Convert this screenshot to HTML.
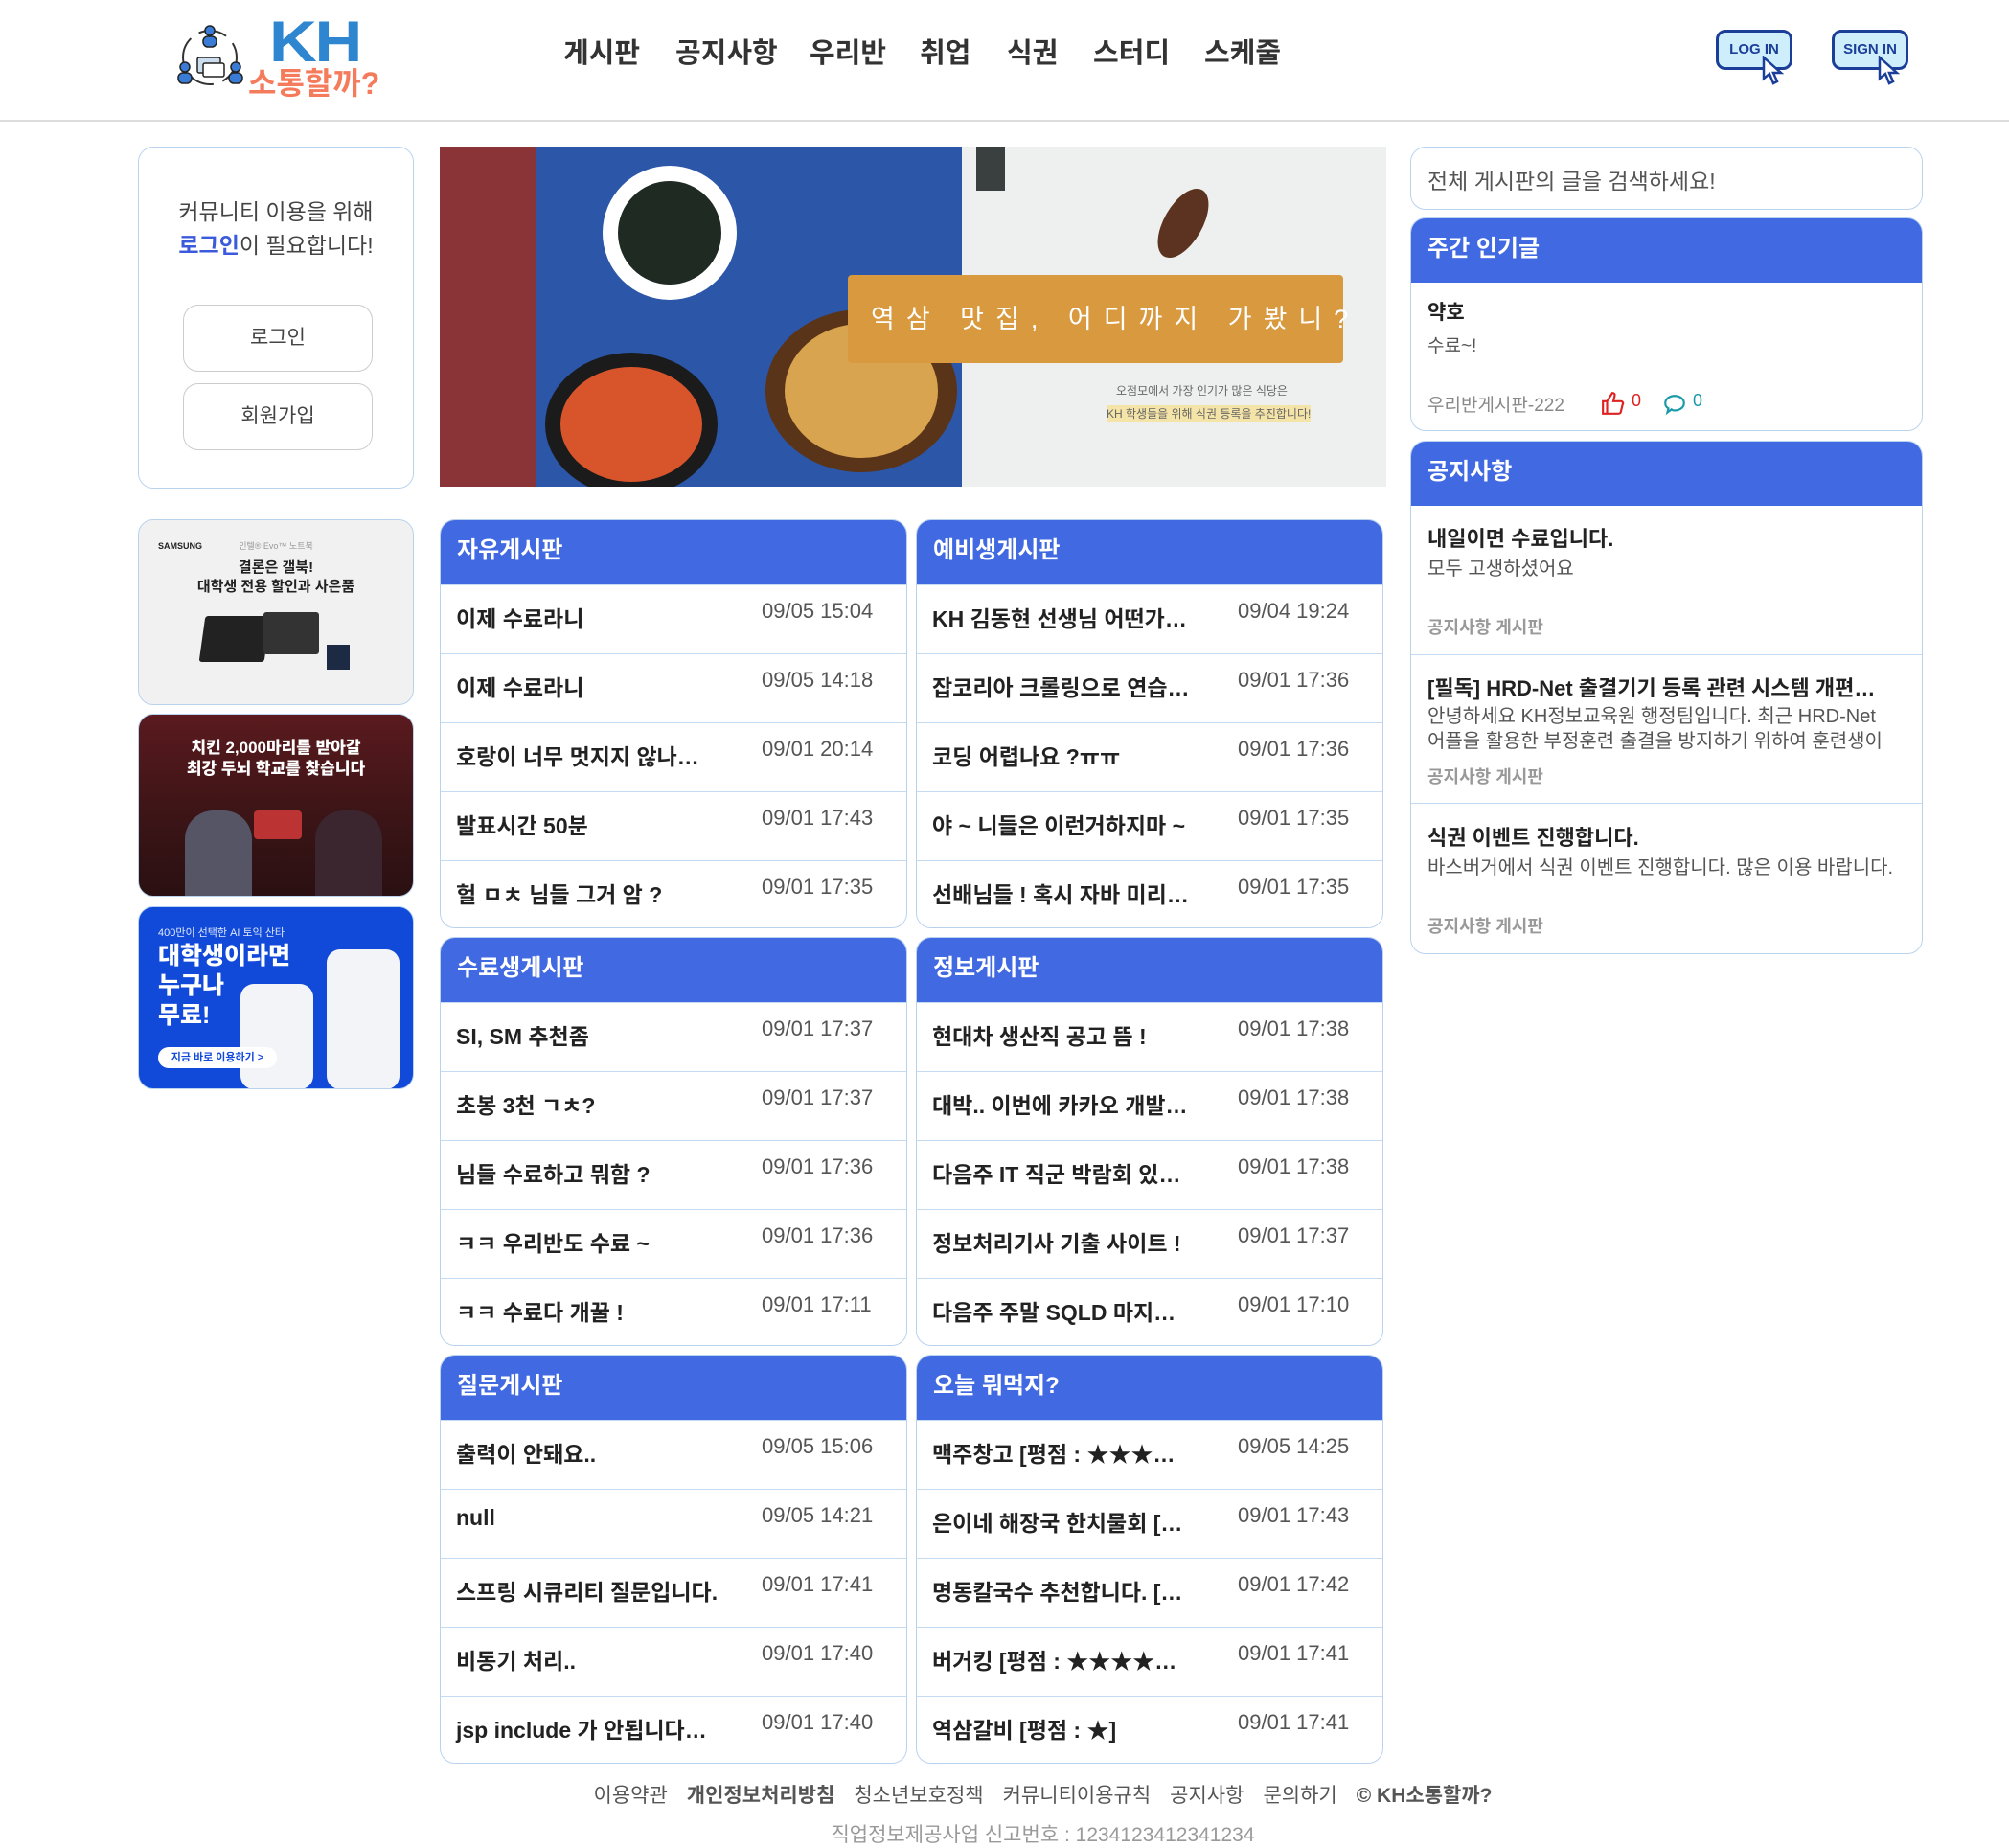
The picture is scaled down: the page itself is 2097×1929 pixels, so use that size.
<!DOCTYPE html>
<html><head><meta charset="utf-8"><style>
*{box-sizing:border-box;margin:0;padding:0}
body{width:2097px;height:1926px;background:#fff;font-family:"Liberation Sans","Noto Sans CJK KR",sans-serif;color:#222;position:relative;overflow:hidden}
.a{position:absolute}
.hdr{left:0;top:0;width:2097px;height:127px;border-bottom:2px solid #ddd}
.nav{top:32px;font-size:29px;font-weight:bold;color:#333}
.box{border:1.5px solid #b9d3ef;border-radius:16px;background:#fff;overflow:hidden}
.bh{background:#4169e1;color:#fff;font-weight:bold;font-size:24px;padding-left:17px;height:67px;line-height:64px}
.row{height:72px;border-top:1.5px solid #c5dbf2;position:relative}
.row .t{position:absolute;left:16px;top:16px;font-size:23px;font-weight:bold;color:#222;white-space:nowrap}
.row .d{position:absolute;left:335px;top:14px;font-size:22px;color:#555}
.row:first-child{border-top:none}
.btn{position:absolute;left:46px;width:198px;height:70px;border:1.5px solid #ccc;border-radius:16px;text-align:center;line-height:68px;font-size:21px;color:#444}
.ni{position:absolute;left:17px;font-size:21px}
.ft a{color:#555;text-decoration:none;margin:0 10px}
</style></head><body>
<div class="a hdr"></div>
<svg class="a" style="left:184px;top:24px" width="72" height="76" viewBox="0 0 72 76">
<circle cx="35" cy="36" r="28" fill="none" stroke="#333" stroke-width="2" stroke-dasharray="30 10"/>
<circle cx="35" cy="8" r="5" fill="#3a7bd5" stroke="#222" stroke-width="1.5"/><rect x="28" y="14" width="14" height="11" rx="5" fill="#3a7bd5" stroke="#222" stroke-width="1.5"/>
<circle cx="9" cy="46" r="5" fill="#3a7bd5" stroke="#222" stroke-width="1.5"/><rect x="2" y="52" width="14" height="11" rx="5" fill="#3a7bd5" stroke="#222" stroke-width="1.5"/>
<circle cx="62" cy="46" r="5" fill="#3a7bd5" stroke="#222" stroke-width="1.5"/><rect x="55" y="52" width="14" height="11" rx="5" fill="#3a7bd5" stroke="#222" stroke-width="1.5"/>
<rect x="22" y="36" width="24" height="16" rx="2" fill="#cde" stroke="#222" stroke-width="1.5"/><rect x="28" y="42" width="22" height="14" rx="2" fill="#fff" stroke="#222" stroke-width="1.5"/>
</svg>
<div class="a" style="left:281px;top:14px;font-size:60px;font-weight:900;color:#2f86d0;letter-spacing:-2px;line-height:60px;transform:scaleX(1.15);transform-origin:left">KH</div>
<div class="a" style="left:259px;top:68px;font-size:32px;font-weight:bold;color:#f47c5c;line-height:38px">소통할까?</div>
<div class="a nav" style="left:588px">게시판</div>
<div class="a nav" style="left:705px">공지사항</div>
<div class="a nav" style="left:845px">우리반</div>
<div class="a nav" style="left:960px">취업</div>
<div class="a nav" style="left:1051px">식권</div>
<div class="a nav" style="left:1141px">스터디</div>
<div class="a nav" style="left:1257px">스케줄</div>
<div class="a" style="left:1791px;top:31px;width:80px;height:42px;border:3px solid #1b3f99;border-radius:10px;background:#cfeefc;font:bold 15px 'Liberation Sans';color:#1b3f99;text-align:center;line-height:36px">LOG IN</div>
<svg class="a" style="left:1838px;top:58px" width="26" height="32" viewBox="0 0 26 32"><path d="M3 2 L3 24 L9 19 L13 29 L17 27 L13 18 L21 18 Z" fill="#fff" stroke="#1b3f99" stroke-width="2.5"/></svg>
<div class="a" style="left:1912px;top:31px;width:80px;height:42px;border:3px solid #1b3f99;border-radius:10px;background:#cfeefc;font:bold 15px 'Liberation Sans';color:#1b3f99;text-align:center;line-height:36px">SIGN IN</div>
<svg class="a" style="left:1959px;top:58px" width="26" height="32" viewBox="0 0 26 32"><path d="M3 2 L3 24 L9 19 L13 29 L17 27 L13 18 L21 18 Z" fill="#fff" stroke="#1b3f99" stroke-width="2.5"/></svg>

<div class="a box" style="left:144px;top:153px;width:288px;height:357px">
<div style="position:absolute;top:50px;width:100%;text-align:center;font-size:23px;color:#444;line-height:35px">커뮤니티 이용을 위해<br><span style="color:#3b5bdb;font-weight:bold">로그인</span>이 필요합니다!</div>
<div class="btn" style="top:164px">로그인</div>
<div class="btn" style="top:246px">회원가입</div>
</div>

<div class="a box" style="left:144px;top:542px;width:288px;height:194px;background:#f1f1f1">
<div class="a" style="left:20px;top:22px;font:bold 9px 'Liberation Sans';color:#222">SAMSUNG</div>
<div class="a" style="left:0;top:20px;width:100%;text-align:center;font-size:9px;color:#999">인텔® Evo™ 노트북</div>
<div class="a" style="left:0;top:40px;width:100%;text-align:center;font-size:15px;font-weight:bold;line-height:20px">결론은 갤북!<br>대학생 전용 할인과 사은품</div>
<div class="a" style="left:66px;top:100px;width:68px;height:48px;background:#222;transform:skewX(-8deg);border-radius:3px"></div>
<div class="a" style="left:130px;top:96px;width:58px;height:44px;background:#333;border-radius:3px"></div>
<div class="a" style="left:196px;top:130px;width:24px;height:26px;background:#1d2a44"></div>
</div>
<div class="a box" style="left:144px;top:745px;width:288px;height:191px;background:linear-gradient(#5a1a1e,#3a1416 60%,#2a1012)">
<div class="a" style="left:0;top:24px;width:100%;text-align:center;font-size:17px;font-weight:900;color:#fff;line-height:22px">치킨 2,000마리를 받아갈<br>최강 두뇌 학교를 찾습니다</div>
<div class="a" style="left:48px;top:100px;width:70px;height:90px;background:#556;border-radius:30px 30px 0 0"></div>
<div class="a" style="left:184px;top:100px;width:70px;height:90px;background:#3b2630;border-radius:30px 30px 0 0"></div>
<div class="a" style="left:120px;top:100px;width:50px;height:30px;background:#b33;border-radius:4px"></div>
</div>
<div class="a box" style="left:144px;top:946px;width:288px;height:191px;background:#1149d8">
<div class="a" style="left:20px;top:18px;font-size:11px;color:#dfe8ff">400만이 선택한 AI 토익 산타</div>
<div class="a" style="left:20px;top:36px;font-size:25px;font-weight:900;color:#fff;line-height:31px">대학생이라면<br>누구나<br>무료!</div>
<div class="a" style="left:106px;top:80px;width:76px;height:110px;background:#f2f4f8;border-radius:14px"></div>
<div class="a" style="left:196px;top:44px;width:76px;height:146px;background:#f2f4f8;border-radius:14px"></div>
<div class="a" style="left:20px;top:146px;width:124px;height:22px;background:#fff;border-radius:11px;font-size:11px;color:#1149d8;text-align:center;line-height:22px;font-weight:bold">지금 바로 이용하기 &gt;</div>
</div>

<div class="a" style="left:459px;top:153px;width:988px;height:355px;overflow:hidden;background:#edf0ee">
<div class="a" style="left:0;top:0;width:545px;height:355px;background:#2c56a8"></div>
<div class="a" style="left:0;top:0;width:100px;height:355px;background:#8b3438"></div>
<div class="a" style="left:170px;top:20px;width:140px;height:140px;border-radius:50%;background:#fff"></div>
<div class="a" style="left:186px;top:36px;width:108px;height:108px;border-radius:50%;background:#1f2a22"></div>
<div class="a" style="left:110px;top:215px;width:180px;height:150px;border-radius:50%;background:#1b1b1b"></div>
<div class="a" style="left:126px;top:230px;width:148px;height:120px;border-radius:50%;background:#d8552c"></div>
<div class="a" style="left:340px;top:170px;width:200px;height:170px;border-radius:50%;background:#5a3418"></div>
<div class="a" style="left:360px;top:185px;width:160px;height:140px;border-radius:50%;background:#d9a44f"></div>
<div class="a" style="left:560px;top:0;width:30px;height:46px;background:#39403f"></div>
<div class="a" style="left:756px;top:40px;width:40px;height:80px;border-radius:50%;background:#5b3320;transform:rotate(30deg)"></div>
<div class="a" style="left:426px;top:134px;width:517px;height:92px;background:#d9993e;border-radius:4px"></div>
<div class="a" style="left:450px;top:158px;font-size:27px;color:#fff;letter-spacing:12px">역삼 맛집, 어디까지 가봤니?</div>
<div class="a" style="left:706px;top:246px;font-size:12px;color:#666">오점모에서 가장 인기가 많은 식당은</div>
<div class="a" style="left:696px;top:270px;font-size:12px;color:#666;background:#f5e4a8">KH 학생들을 위해 식권 등록을 추진합니다!</div>
</div>

<div class="a box" style="left:1472px;top:153px;width:535px;height:66px">
<div class="a" style="left:17px;top:16px;font-size:23px;color:#555">전체 게시판의 글을 검색하세요!</div>
</div>
<div class="a box" style="left:1472px;top:227px;width:535px;height:223px">
<div class="bh">주간 인기글</div>
<div class="ni" style="top:82px;font-weight:bold">약호</div>
<div class="ni" style="top:118px;font-size:19px;color:#555">수료~!</div>
<div class="ni" style="top:180px;font-size:19px;color:#888">우리반게시판-222</div>
<svg class="a" style="left:198px;top:180px" width="26" height="26" viewBox="0 0 24 24"><path d="M2 10h4v12H2zM6 10l5-8c2 0 3 1 2 4l-1 4h7c2 0 3 2 2 3l-2 8c-1 1-1 1-2 1H6" fill="none" stroke="#d22" stroke-width="2"/></svg>
<div class="a" style="left:230px;top:180px;font-size:18px;color:#d22">0</div>
<svg class="a" style="left:262px;top:182px" width="26" height="26" viewBox="0 0 24 24"><path d="M12 3c5 0 9 3 9 7s-4 7-9 7c-1 0-2 0-3-1l-4 3 1-4c-2-1-3-3-3-5 0-4 4-7 9-7z" fill="none" stroke="#1a9aa8" stroke-width="2"/></svg>
<div class="a" style="left:294px;top:180px;font-size:18px;color:#1a9aa8">0</div>
</div>
<div class="a box" style="left:1472px;top:460px;width:535px;height:536px">
<div class="bh">공지사항</div>
<div class="ni" style="top:84px;font-weight:bold;font-size:22px">내일이면 수료입니다.</div>
<div class="ni" style="top:116px;font-size:20px;color:#555">모두 고생하셨어요</div>
<div class="ni" style="top:180px;font-size:18px;color:#999;font-weight:bold">공지사항 게시판</div>
<div class="a" style="left:0;top:222px;width:100%;border-top:1.5px solid #c5dbf2"></div>
<div class="ni" style="top:240px;font-weight:bold;font-size:22px">[필독] HRD-Net 출결기기 등록 관련 시스템 개편…</div>
<div class="ni" style="top:274px;font-size:20px;color:#555;line-height:26px;width:490px">안녕하세요 KH정보교육원 행정팀입니다. 최근 HRD-Net<br>어플을 활용한 부정훈련 출결을 방지하기 위하여 훈련생이</div>
<div class="ni" style="top:336px;font-size:18px;color:#999;font-weight:bold">공지사항 게시판</div>
<div class="a" style="left:0;top:377px;width:100%;border-top:1.5px solid #c5dbf2"></div>
<div class="ni" style="top:396px;font-weight:bold;font-size:22px">식권 이벤트 진행합니다.</div>
<div class="ni" style="top:428px;font-size:20px;color:#555">바스버거에서 식권 이벤트 진행합니다. 많은 이용 바랍니다.</div>
<div class="ni" style="top:492px;font-size:18px;color:#999;font-weight:bold">공지사항 게시판</div>
</div>

<div class="a box" style="left:459px;top:542px;width:488px;height:427px"><div class="bh">자유게시판</div>
<div class="row"><span class="t">이제 수료라니</span><span class="d">09/05 15:04</span></div>
<div class="row"><span class="t">이제 수료라니</span><span class="d">09/05 14:18</span></div>
<div class="row"><span class="t">호랑이 너무 멋지지 않나…</span><span class="d">09/01 20:14</span></div>
<div class="row"><span class="t">발표시간 50분</span><span class="d">09/01 17:43</span></div>
<div class="row"><span class="t">헐 ㅁㅊ 님들 그거 암 ?</span><span class="d">09/01 17:35</span></div></div>
<div class="a box" style="left:956px;top:542px;width:488px;height:427px"><div class="bh">예비생게시판</div>
<div class="row"><span class="t">KH 김동현 선생님 어떤가…</span><span class="d">09/04 19:24</span></div>
<div class="row"><span class="t">잡코리아 크롤링으로 연습…</span><span class="d">09/01 17:36</span></div>
<div class="row"><span class="t">코딩 어렵나요 ?ㅠㅠ</span><span class="d">09/01 17:36</span></div>
<div class="row"><span class="t">야 ~ 니들은 이런거하지마 ~</span><span class="d">09/01 17:35</span></div>
<div class="row"><span class="t">선배님들 ! 혹시 자바 미리…</span><span class="d">09/01 17:35</span></div></div>

<div class="a box" style="left:459px;top:978px;width:488px;height:427px"><div class="bh">수료생게시판</div>
<div class="row"><span class="t">SI, SM 추천좀</span><span class="d">09/01 17:37</span></div>
<div class="row"><span class="t">초봉 3천 ㄱㅊ?</span><span class="d">09/01 17:37</span></div>
<div class="row"><span class="t">님들 수료하고 뭐함 ?</span><span class="d">09/01 17:36</span></div>
<div class="row"><span class="t">ㅋㅋ 우리반도 수료 ~</span><span class="d">09/01 17:36</span></div>
<div class="row"><span class="t">ㅋㅋ 수료다 개꿀 !</span><span class="d">09/01 17:11</span></div></div>
<div class="a box" style="left:956px;top:978px;width:488px;height:427px"><div class="bh">정보게시판</div>
<div class="row"><span class="t">현대차 생산직 공고 뜸 !</span><span class="d">09/01 17:38</span></div>
<div class="row"><span class="t">대박.. 이번에 카카오 개발…</span><span class="d">09/01 17:38</span></div>
<div class="row"><span class="t">다음주 IT 직군 박람회 있…</span><span class="d">09/01 17:38</span></div>
<div class="row"><span class="t">정보처리기사 기출 사이트 !</span><span class="d">09/01 17:37</span></div>
<div class="row"><span class="t">다음주 주말 SQLD 마지…</span><span class="d">09/01 17:10</span></div></div>

<div class="a box" style="left:459px;top:1414px;width:488px;height:427px"><div class="bh">질문게시판</div>
<div class="row"><span class="t">출력이 안돼요..</span><span class="d">09/05 15:06</span></div>
<div class="row"><span class="t">null</span><span class="d">09/05 14:21</span></div>
<div class="row"><span class="t">스프링 시큐리티 질문입니다.</span><span class="d">09/01 17:41</span></div>
<div class="row"><span class="t">비동기 처리..</span><span class="d">09/01 17:40</span></div>
<div class="row"><span class="t">jsp include 가 안됩니다…</span><span class="d">09/01 17:40</span></div></div>
<div class="a box" style="left:956px;top:1414px;width:488px;height:427px"><div class="bh">오늘 뭐먹지?</div>
<div class="row"><span class="t">맥주창고 [평점 : ★★★…</span><span class="d">09/05 14:25</span></div>
<div class="row"><span class="t">은이네 해장국 한치물회 […</span><span class="d">09/01 17:43</span></div>
<div class="row"><span class="t">명동칼국수 추천합니다. […</span><span class="d">09/01 17:42</span></div>
<div class="row"><span class="t">버거킹 [평점 : ★★★★…</span><span class="d">09/01 17:41</span></div>
<div class="row"><span class="t">역삼갈비 [평점 : ★]</span><span class="d">09/01 17:41</span></div></div>

<div class="a ft" style="left:40px;top:1858px;width:2097px;text-align:center;font-size:21px;color:#555">
<a>이용약관</a><a style="font-weight:bold">개인정보처리방침</a><a>청소년보호정책</a><a>커뮤니티이용규칙</a><a>공지사항</a><a>문의하기</a><a style="font-weight:bold">© KH소통할까?</a></div>
<div class="a" style="left:40px;top:1899px;width:2097px;text-align:center;font-size:21px;color:#999">직업정보제공사업 신고번호 : 1234123412341234</div>
</body></html>
